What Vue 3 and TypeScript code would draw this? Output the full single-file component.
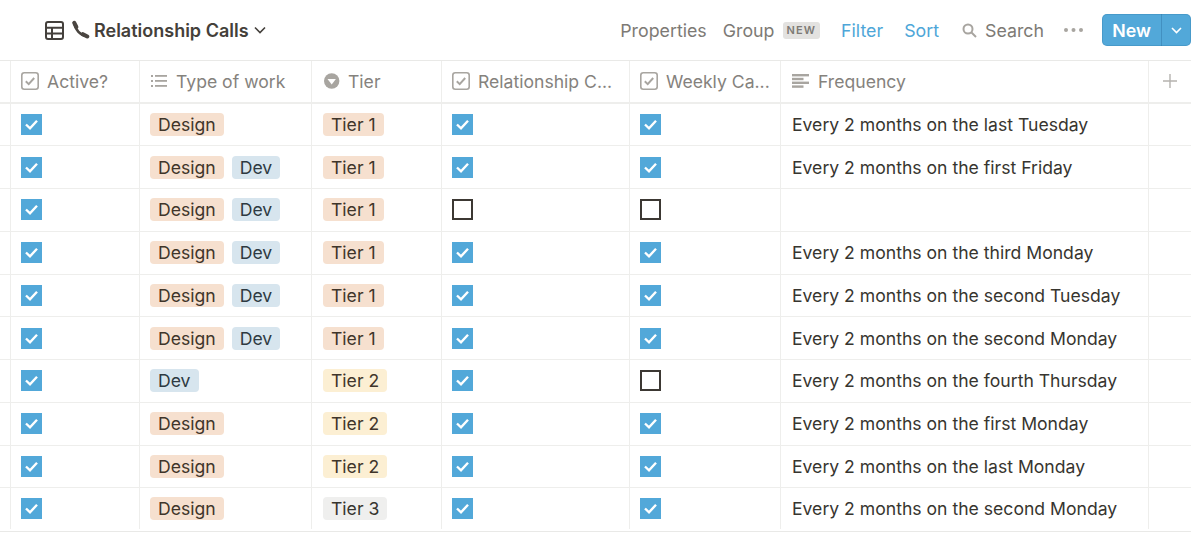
<script setup lang="ts">
interface Row { active: boolean; types: string[]; tier: string; rel: boolean; weekly: boolean; freq: string }
const rows: Row[] = [
  { active: true, types: ['Design'], tier: 'Tier 1', rel: true, weekly: true, freq: 'Every 2 months on the last Tuesday' },
  { active: true, types: ['Design', 'Dev'], tier: 'Tier 1', rel: true, weekly: true, freq: 'Every 2 months on the first Friday' },
  { active: true, types: ['Design', 'Dev'], tier: 'Tier 1', rel: false, weekly: false, freq: '' },
  { active: true, types: ['Design', 'Dev'], tier: 'Tier 1', rel: true, weekly: true, freq: 'Every 2 months on the third Monday' },
  { active: true, types: ['Design', 'Dev'], tier: 'Tier 1', rel: true, weekly: true, freq: 'Every 2 months on the second Tuesday' },
  { active: true, types: ['Design', 'Dev'], tier: 'Tier 1', rel: true, weekly: true, freq: 'Every 2 months on the second Monday' },
  { active: true, types: ['Dev'], tier: 'Tier 2', rel: true, weekly: false, freq: 'Every 2 months on the fourth Thursday' },
  { active: true, types: ['Design'], tier: 'Tier 2', rel: true, weekly: true, freq: 'Every 2 months on the first Monday' },
  { active: true, types: ['Design'], tier: 'Tier 2', rel: true, weekly: true, freq: 'Every 2 months on the last Monday' },
  { active: true, types: ['Design'], tier: 'Tier 3', rel: true, weekly: true, freq: 'Every 2 months on the second Monday' },
]
const tierClass = (t: string) => 'tier' + t.slice(-1)
</script>

<template>
  <div class="page">
    <header class="bar">
      <div class="title">
        <svg class="tbl" width="19" height="19" viewBox="0 0 19 19" fill="none" stroke="#44403c" stroke-width="2">
          <rect x="1" y="1" width="17" height="17" rx="2" />
          <path d="M1 6.800h17M1 12.500h17M7 6.800v11" />
        </svg>
        <svg class="phone" width="19" height="19" viewBox="0 0 19 19" fill="none" stroke="#4a4540" stroke-linecap="round">
          <path d="M3.500 3.500C4 9.500 9.500 15.500 15.500 16" stroke-width="2.600" />
          <path d="M3.200 2.800l2.200 4.200" stroke-width="4" />
          <path d="M12 14.200l4.300 2.300" stroke-width="4" />
        </svg>
        <span class="name">Relationship Calls</span>
        <svg class="chev" width="12" height="8" viewBox="0 0 12 8" fill="none" stroke="#44403c" stroke-width="1.600"><path d="M1 1.500l5 5 5-5" /></svg>
      </div>
      <nav class="tools">
        <span class="tool props">Properties</span>
        <span class="tool group">Group</span>
        <span class="newtag">NEW</span>
        <span class="tool blue filter">Filter</span>
        <span class="tool blue sort">Sort</span>
        <svg class="mag" width="15" height="15" viewBox="0 0 15 15" fill="none" stroke="#a8a5a0" stroke-width="2"><circle cx="6" cy="6" r="4.500" /><path d="M9.500 9.500l4.500 4.500" /></svg>
        <span class="tool search">Search</span>
        <svg class="dots" width="19" height="4" viewBox="0 0 19 4" fill="#a8a5a0"><circle cx="2" cy="2" r="2" /><circle cx="9.500" cy="2" r="2" /><circle cx="17" cy="2" r="2" /></svg>
        <div class="newbtn">
          <span class="newlabel">New</span>
          <span class="newarrow">
            <svg width="11" height="7" viewBox="0 0 11 7" fill="none" stroke="#fff" stroke-width="1.600"><path d="M1 1l4.500 4.500L10 1" /></svg>
          </span>
        </div>
      </nav>
    </header>

    <div class="table">
      <div class="row head">
        <div class="cell gutter"></div>
        <div class="cell">
          <svg class="hicon" width="18" height="18" viewBox="0 0 18 18" fill="none"><rect x=".8" y=".8" width="16.400" height="16.400" rx="2.500" stroke="#a8a5a0" stroke-width="1.600" /><path d="M4.800 9.300l2.900 2.800L13.200 6" stroke="#a8a5a0" stroke-width="2" /></svg>
          <span>Active?</span>
        </div>
        <div class="cell">
          <svg class="hicon" width="18" height="18" viewBox="0 0 18 18" fill="#a8a5a0"><rect x="1" y="3" width="2" height="2" /><rect x="1" y="8" width="2" height="2" /><rect x="1" y="13" width="2" height="2" /><rect x="5" y="3" width="12" height="1.800" /><rect x="5" y="8" width="12" height="1.800" /><rect x="5" y="13" width="12" height="1.800" /></svg>
          <span>Type of work</span>
        </div>
        <div class="cell">
          <svg class="hicon" width="18" height="18" viewBox="0 0 18 18"><circle cx="9.700" cy="9" r="7.700" fill="#a8a5a0" /><path d="M5.500 7h8.400L9.700 12.500z" fill="#fff" /></svg>
          <span>Tier</span>
        </div>
        <div class="cell">
          <svg class="hicon" width="18" height="18" viewBox="0 0 18 18" fill="none"><rect x=".8" y=".8" width="16.400" height="16.400" rx="2.500" stroke="#a8a5a0" stroke-width="1.600" /><path d="M4.800 9.300l2.900 2.800L13.200 6" stroke="#a8a5a0" stroke-width="2" /></svg>
          <span>Relationship C...</span>
        </div>
        <div class="cell">
          <svg class="hicon" width="18" height="18" viewBox="0 0 18 18" fill="none"><rect x=".8" y=".8" width="16.400" height="16.400" rx="2.500" stroke="#a8a5a0" stroke-width="1.600" /><path d="M4.800 9.300l2.900 2.800L13.200 6" stroke="#a8a5a0" stroke-width="2" /></svg>
          <span>Weekly Ca...</span>
        </div>
        <div class="cell text-cell">
          <svg class="hicon" width="18" height="18" viewBox="0 0 18 18" fill="#a8a5a0"><rect x="0" y="2" width="17" height="2.400" /><rect x="0" y="5.800" width="11.500" height="2.400" /><rect x="0" y="9.600" width="17" height="2.400" /><rect x="0" y="13.400" width="11.500" height="2.400" /></svg>
          <span>Frequency</span>
        </div>
        <div class="cell plus">
          <svg width="14" height="14" viewBox="0 0 14 14" stroke="#b5b3af" stroke-width="1.400"><path d="M7 0v14M0 7h14" /></svg>
        </div>
      </div>

      <div v-for="(r, i) in rows" :key="i" class="row">
        <div class="cell gutter"></div>
        <div class="cell">
          <span class="box" :class="{ on: r.active }"><svg v-if="r.active" width="21" height="21" viewBox="0 0 21 21" fill="none" stroke="#fff" stroke-width="2.400"><path d="M5 10.500l4 3.800 7-7.500" /></svg></span>
        </div>
        <div class="cell tags">
          <span v-for="t in r.types" :key="t" class="tag" :class="t.toLowerCase()">{{ t }}</span>
        </div>
        <div class="cell tier-cell">
          <span class="tag" :class="tierClass(r.tier)">{{ r.tier }}</span>
        </div>
        <div class="cell">
          <span class="box" :class="{ on: r.rel }"><svg v-if="r.rel" width="21" height="21" viewBox="0 0 21 21" fill="none" stroke="#fff" stroke-width="2.400"><path d="M5 10.500l4 3.800 7-7.500" /></svg></span>
        </div>
        <div class="cell">
          <span class="box" :class="{ on: r.weekly }"><svg v-if="r.weekly" width="21" height="21" viewBox="0 0 21 21" fill="none" stroke="#fff" stroke-width="2.400"><path d="M5 10.500l4 3.800 7-7.500" /></svg></span>
        </div>
        <div class="cell text-cell">{{ r.freq }}</div>
        <div class="cell"></div>
      </div>
    </div>
  </div>
</template>

<style>
html, body { margin: 0; background: #fff; overflow: hidden; }
</style>

<style scoped>
.page {
  width: 1200px;
  height: 544px;
  font-family: Inter, "Liberation Sans", sans-serif;
  color: #37352f;
  font-size: 17.600px;
  overflow: hidden;
}
.bar {
  height: 60px;
  box-sizing: border-box;
  display: flex;
  align-items: center;
  justify-content: space-between;
  padding: 0 9px 0 45px;
  width: 1200px;
}
.title, .tools { display: flex; align-items: center; }
.tbl { margin-right: 7px; }
.phone { margin-right: 4px; margin-top: -1px; }
.name { font-weight: 600; font-size: 18px; color: #44403a; white-space: nowrap; }
.chev { margin-left: 5px; }
.tool { color: #7d7a75; font-size: 17.800px; white-space: nowrap; }
.blue { color: #4ea6d8; }
.group { margin-left: 16px; }
.newtag {
  margin-left: 8px;
  background: #e3e2e0;
  border-radius: 3px;
  color: #7d7a75;
  font-size: 11px;
  font-weight: 600;
  letter-spacing: 1.100px;
  padding: 1px 4px 1px 4px;
  line-height: 15px;
}
.filter { margin-left: 21px; }
.sort { margin-left: 21px; }
.mag { margin-left: 23px; margin-right: 8px; }
.dots { margin-left: 20px; margin-right: 19px; }
.newbtn {
  display: flex;
  height: 32px;
  width: 89px;
  background: #52a8d9;
  border-radius: 5px;
  color: #fff;
  box-shadow: inset 0 0 0 1px rgba(40, 110, 160, 0.250);
}
.newlabel {
  width: 60px;
  display: flex;
  align-items: center;
  justify-content: center;
  font-weight: 600;
  font-size: 17.800px;
  border-right: 1px solid rgba(30, 90, 140, 0.300);
  box-sizing: border-box;
}
.newarrow { flex: 1; display: flex; align-items: center; justify-content: center; }
.table {
  width: 1191px;
  border-top: 1px solid #e9e9e7;
  border-bottom: 1px solid #e9e9e7;
  padding-bottom: 1.250px;
}
.row {
  display: grid;
  grid-template-columns: 10px 129px 172px 130px 188px 151px 368px 43px;
  height: 42.750px;
  box-sizing: border-box;
  border-bottom: 1px solid #eeeeec;
}
.row:last-child { border-bottom: none; height: 41px; }
.row.head { height: 42.500px; border-bottom: 2px solid #eeeeec; color: #85827d; }
.cell {
  border-left: 1px solid #eeeeec;
  display: flex;
  align-items: center;
  padding-left: 10px;
  min-width: 0;
  white-space: nowrap;
  box-sizing: border-box;
}
.gutter { border-left: none; padding: 0; }
.hicon { flex: none; margin-right: 8px; }
.plus { justify-content: center; padding-left: 0; }
.text-cell, .tier-cell { padding-left: 11px; }
.box {
  width: 21px;
  height: 21px;
  box-sizing: border-box;
  border: 2px solid #3c3833;
  display: block;
  flex: none;
}
.box svg { display: block; }
.box.on { background: #52a8d9; border: none; }
.tags { gap: 8px; }
.tag {
  height: 23px;
  line-height: 23px;
  padding: 0 8px;
  border-radius: 4px;
  color: #40352a;
}
.design, .tier1 { background: #f6e0cf; }
.dev { background: #d7e5ee; color: #2e3a42; }
.tier2 { background: #fcefd3; }
.tier3 { background: #efefee; color: #37352f; }
</style>
